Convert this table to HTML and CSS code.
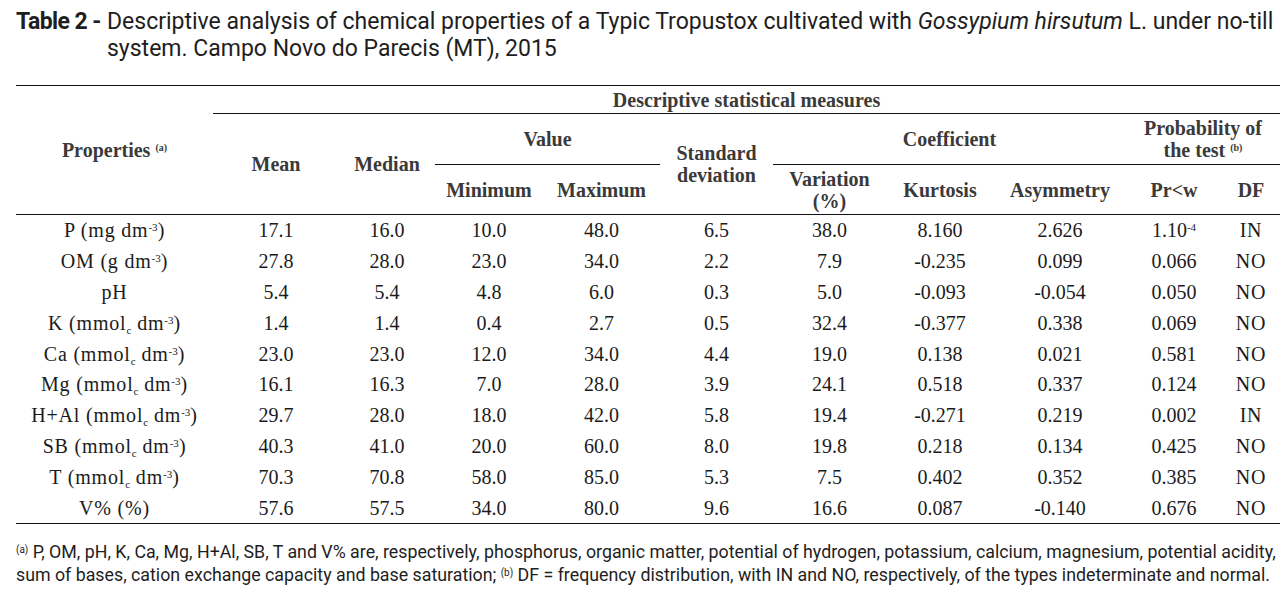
FILE: index.html
```html
<!DOCTYPE html>
<html>
<head>
<meta charset="utf-8">
<link rel="stylesheet" href="styles.css">
</head>
<body>
<div class="page">
  <div class="caption">
    <span class="cap-label">Table 2 -</span>
    <span class="cap-text">Descriptive analysis of chemical properties of a Typic Tropustox cultivated with <i>Gossypium hirsutum</i> L. under no-till<br>system. Campo Novo do Parecis (MT), 2015</span>
  </div>
  <table class="stats">
    <colgroup>
      <col class="c-prop"><col class="c-mean"><col class="c-med"><col class="c-min"><col class="c-max"><col class="c-sd"><col class="c-var"><col class="c-kur"><col class="c-asy"><col class="c-pr"><col class="c-df">
    </colgroup>
    <thead>
      <tr class="h1">
        <th rowspan="3">Properties <sup class="note">(a)</sup></th>
        <th colspan="10" class="ruled">Descriptive statistical measures</th>
      </tr>
      <tr class="h2">
        <th rowspan="2">Mean</th>
        <th rowspan="2">Median</th>
        <th colspan="2" class="ruled">Value</th>
        <th rowspan="2">Standard<br>deviation</th>
        <th colspan="3" class="ruled">Coefficient</th>
        <th colspan="2" class="ruled">Probability of<br>the test <sup class="note">(b)</sup></th>
      </tr>
      <tr class="h3">
        <th>Minimum</th>
        <th>Maximum</th>
        <th>Variation<br>(%)</th>
        <th>Kurtosis</th>
        <th>Asymmetry</th>
        <th>Pr&lt;w</th>
        <th>DF</th>
      </tr>
    </thead>
    <tbody>
      <tr><td class="lbl">P (mg dm<sup>-3</sup>)</td><td>17.1</td><td>16.0</td><td>10.0</td><td>48.0</td><td>6.5</td><td>38.0</td><td>8.160</td><td>2.626</td><td>1.10<sup>-4</sup></td><td class="lbl">IN</td></tr>
      <tr><td class="lbl">OM (g dm<sup>-3</sup>)</td><td>27.8</td><td>28.0</td><td>23.0</td><td>34.0</td><td>2.2</td><td>7.9</td><td>-0.235</td><td>0.099</td><td>0.066</td><td class="lbl">NO</td></tr>
      <tr><td class="lbl">pH</td><td>5.4</td><td>5.4</td><td>4.8</td><td>6.0</td><td>0.3</td><td>5.0</td><td>-0.093</td><td>-0.054</td><td>0.050</td><td class="lbl">NO</td></tr>
      <tr><td class="lbl">K (mmol<sub>c</sub> dm<sup>-3</sup>)</td><td>1.4</td><td>1.4</td><td>0.4</td><td>2.7</td><td>0.5</td><td>32.4</td><td>-0.377</td><td>0.338</td><td>0.069</td><td class="lbl">NO</td></tr>
      <tr><td class="lbl">Ca (mmol<sub>c</sub> dm<sup>-3</sup>)</td><td>23.0</td><td>23.0</td><td>12.0</td><td>34.0</td><td>4.4</td><td>19.0</td><td>0.138</td><td>0.021</td><td>0.581</td><td class="lbl">NO</td></tr>
      <tr><td class="lbl">Mg (mmol<sub>c</sub> dm<sup>-3</sup>)</td><td>16.1</td><td>16.3</td><td>7.0</td><td>28.0</td><td>3.9</td><td>24.1</td><td>0.518</td><td>0.337</td><td>0.124</td><td class="lbl">NO</td></tr>
      <tr><td class="lbl">H+Al (mmol<sub>c</sub> dm<sup>-3</sup>)</td><td>29.7</td><td>28.0</td><td>18.0</td><td>42.0</td><td>5.8</td><td>19.4</td><td>-0.271</td><td>0.219</td><td>0.002</td><td class="lbl">IN</td></tr>
      <tr><td class="lbl">SB (mmol<sub>c</sub> dm<sup>-3</sup>)</td><td>40.3</td><td>41.0</td><td>20.0</td><td>60.0</td><td>8.0</td><td>19.8</td><td>0.218</td><td>0.134</td><td>0.425</td><td class="lbl">NO</td></tr>
      <tr><td class="lbl">T (mmol<sub>c</sub> dm<sup>-3</sup>)</td><td>70.3</td><td>70.8</td><td>58.0</td><td>85.0</td><td>5.3</td><td>7.5</td><td>0.402</td><td>0.352</td><td>0.385</td><td class="lbl">NO</td></tr>
      <tr><td class="lbl">V% (%)</td><td>57.6</td><td>57.5</td><td>34.0</td><td>80.0</td><td>9.6</td><td>16.6</td><td>0.087</td><td>-0.140</td><td>0.676</td><td class="lbl">NO</td></tr>
    </tbody>
  </table>
  <p class="footnote"><sup class="fn">(a)</sup> P, OM, pH, K, Ca, Mg, H+Al, SB, T and V% are, respectively, phosphorus, organic matter, potential of hydrogen, potassium, calcium, magnesium, potential acidity,<br>sum of bases, cation exchange capacity and base saturation; <sup class="fn">(b)</sup> DF = frequency distribution, with IN and NO, respectively, of the types indeterminate and normal.</p>
</div>
</body>
</html>
```
FILE: styles.css
```css
html, body {
  margin: 0;
  padding: 0;
  background: #ffffff;
}
.page {
  padding: 8px 0 0 16px;
  width: 1264px;
  color: #1b1b1b;
}
.caption {
  display: flex;
  font-family: "Roboto", "Liberation Sans", sans-serif;
  font-size: 23px;
  line-height: 27px;
  white-space: nowrap;
  color: #1e1e1e;
}
.cap-label {
  font-weight: bold;
  width: 91px;
  flex: none;
  letter-spacing: -0.6px;
}
.stats {
  margin-top: 23px;
  width: 1264px;
  table-layout: fixed;
  border-collapse: collapse;
  font-family: "Liberation Serif", "DejaVu Serif", serif;
  font-size: 20px;
  color: #1b1b1b;
  border-top: 1px solid #111;
  border-bottom: 1px solid #111;
}
.c-prop { width: 197px; }
.c-mean { width: 126px; }
.c-med { width: 96px; }
.c-min { width: 108px; }
.c-max { width: 117px; }
.c-sd { width: 113px; }
.c-var { width: 113px; }
.c-kur { width: 108px; }
.c-asy { width: 132px; }
.c-pr { width: 96px; }
.c-df { width: 58px; }
.stats th {
  font-weight: bold;
  color: #3a3a3a;
  text-align: center;
  vertical-align: middle;
  padding: 0;
  line-height: 22px;
}
.stats thead {
  border-bottom: 1px solid #111;
}
.h1 { height: 28px; }
.h2 { height: 51px; }
.h3 { height: 50px; }
.stats th.ruled {
  border-bottom: 1px solid #111;
}
.stats td {
  text-align: center;
  padding: 0;
  height: 30.8px;
  line-height: 22px;
  white-space: nowrap;
}
.stats td.lbl {
  letter-spacing: 0.8px;
}
.stats sup {
  font-size: 11px;
  vertical-align: 6px;
  line-height: 0;
  letter-spacing: 0;
}
.stats sub {
  font-size: 11px;
  vertical-align: -4px;
  line-height: 0;
  letter-spacing: 0;
}
.stats sup.note {
  font-size: 10px;
  font-weight: bold;
  vertical-align: 6px;
}
.footnote {
  margin: 16px 0 0 0;
  font-family: "Roboto", "Liberation Sans", sans-serif;
  font-size: 17.8px;
  line-height: 23px;
  white-space: nowrap;
  color: #1e1e1e;
}
.fn {
  font-size: 10px;
  vertical-align: 5px;
  line-height: 0;
}
```
